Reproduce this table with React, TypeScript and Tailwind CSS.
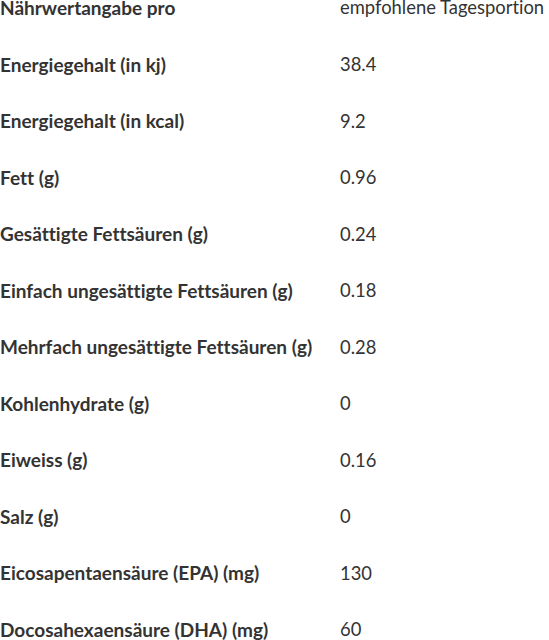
const ROWS = [
  ['Nährwertangabe pro', 'empfohlene Tagesportion'],
  ['Energiegehalt (in kj)', '38.4'],
  ['Energiegehalt (in kcal)', '9.2'],
  ['Fett (g)', '0.96'],
  ['Gesättigte Fettsäuren (g)', '0.24'],
  ['Einfach ungesättigte Fettsäuren (g)', '0.18'],
  ['Mehrfach ungesättigte Fettsäuren (g)', '0.28'],
  ['Kohlenhydrate (g)', '0'],
  ['Eiweiss (g)', '0.16'],
  ['Salz (g)', '0'],
  ['Eicosapentaensäure (EPA) (mg)', '130'],
  ['Docosahexaensäure (DHA) (mg)', '60'],
];

export default function App() {
  return (
    <div className="w-[549px] h-[640px] overflow-hidden bg-white text-[#333] font-['Lato',sans-serif] text-[19px] [font-variant-ligatures:none]">
      <div className="-mt-[20px]">
        {ROWS.map(([label, value]) => (
          <div key={label} className="grid grid-cols-[340px_1fr] h-[56.55px] items-center whitespace-nowrap">
            <div className="font-bold">{label}</div>
            <div className="text-[18.4px]">{value}</div>
          </div>
        ))}
      </div>
    </div>
  );
}
